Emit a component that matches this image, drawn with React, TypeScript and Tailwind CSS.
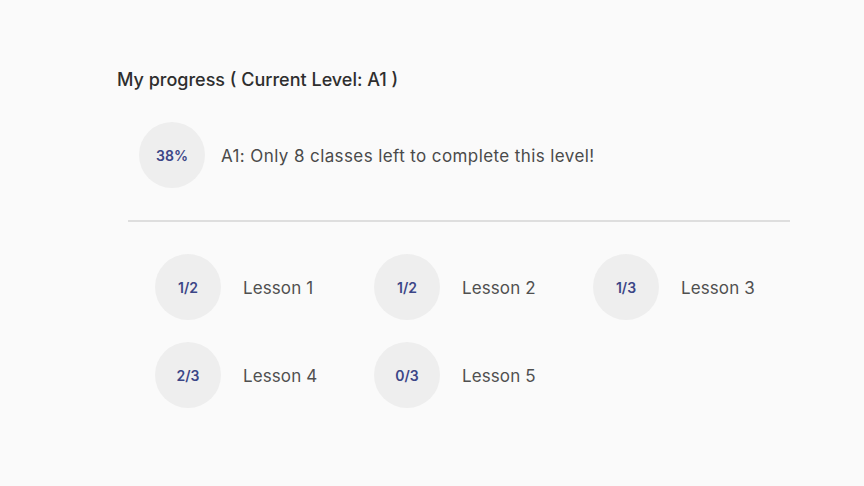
import React from 'react'

const lessons = [
  { score: '1/2', name: 'Lesson 1' },
  { score: '1/2', name: 'Lesson 2' },
  { score: '1/3', name: 'Lesson 3' },
  { score: '2/3', name: 'Lesson 4' },
  { score: '0/3', name: 'Lesson 5' },
]

function Badge({ label }: { label: string }) {
  return (
    <div className="w-[66px] h-[66px] rounded-full bg-[#eeeeee] flex items-center justify-center shrink-0">
      <span className="text-[14px] font-semibold text-[#3c4687]">{label}</span>
    </div>
  )
}

export default function App() {
  return (
    <div
      className="w-[864px] h-[486px] bg-[#fafafa] text-[#333] overflow-hidden"
      style={{ fontFamily: 'Inter, "Noto Sans", sans-serif' }}
    >
      <div className="pt-[67px] pl-[117px] w-[790px]">
        {/* Header */}
        <h2 className="text-[18px] font-medium text-[#2e2e2e] leading-[25px]">
          My progress ( Current Level: A1 )
        </h2>

        {/* Level summary */}
        <div className="mt-[30px] ml-[22px] flex items-center gap-[16px]">
          <Badge label="38%" />
          <span className="text-[17px] tracking-[0.4px] text-[#4a4a4a] pt-[3px]">
            A1: Only 8 classes left to complete this level!
          </span>
        </div>

        <div className="mt-[32px] ml-[11px] h-[2px] bg-[#dedede]" />

        {/* Lessons */}
        <div className="mt-[32px] ml-[38px] grid grid-cols-[219px_219px_219px] gap-y-[22px]">
          {lessons.map((l) => (
            <div key={l.name} className="flex items-center gap-[22px]">
              <Badge label={l.score} />
              <span className="text-[17px] tracking-[0.1px] text-[#505050] pt-[4px]">{l.name}</span>
            </div>
          ))}
        </div>
      </div>
    </div>
  )
}
